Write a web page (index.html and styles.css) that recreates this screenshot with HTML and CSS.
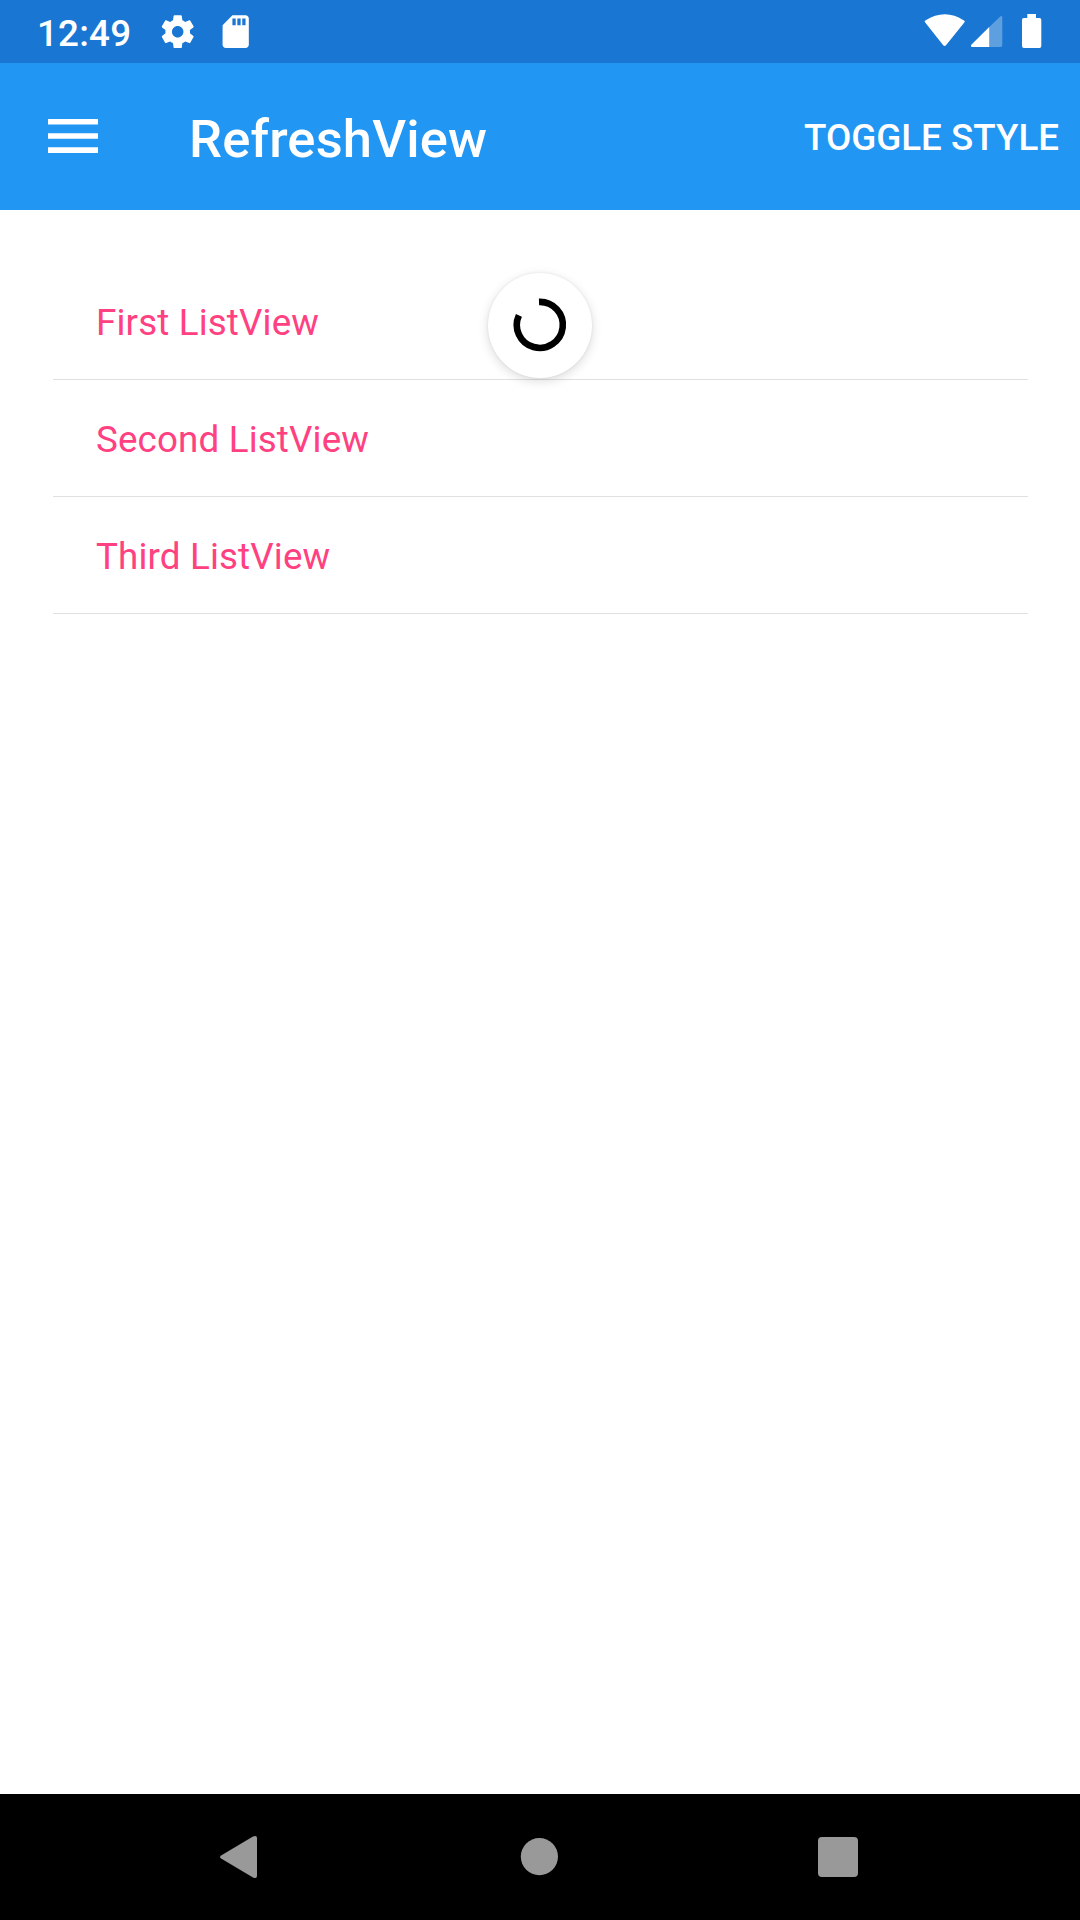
FILE: index.html
```html
<!DOCTYPE html>
<html lang="en">
<head>
<meta charset="utf-8">
<title>RefreshView</title>
<link rel="stylesheet" href="styles.css">
</head>
<body>
<div class="screen">
  <div class="status-bar">
    <span class="clock">12:49</span>
    <svg class="icon-gear" viewBox="0 0 24 24"><path d="M19.43 12.98c.04-.32.07-.64.07-.98s-.03-.66-.07-.98l2.11-1.65c.19-.15.24-.42.12-.64l-2-3.46c-.12-.22-.39-.3-.61-.22l-2.49 1c-.52-.4-1.08-.73-1.69-.98l-.38-2.65C14.46 2.18 14.25 2 14 2h-4c-.25 0-.46.18-.49.42l-.38 2.65c-.61.25-1.17.59-1.69.98l-2.49-1c-.23-.09-.49 0-.61.22l-2 3.46c-.13.22-.07.49.12.64l2.11 1.65c-.04.32-.07.65-.07.98s.03.66.07.98l-2.11 1.65c-.19.15-.24.42-.12.64l2 3.46c.12.22.39.3.61.22l2.49-1c.52.4 1.08.73 1.69.98l.38 2.65c.03.24.24.42.49.42h4c.25 0 .46-.18.49-.42l.38-2.65c.61-.25 1.17-.59 1.69-.98l2.49 1c.23.09.49 0 .61-.22l2-3.46c.12-.22.07-.49-.12-.64l-2.11-1.65zM12 15.5c-1.93 0-3.5-1.57-3.5-3.5s1.57-3.5 3.5-3.5 3.5 1.57 3.5 3.5-1.57 3.5-3.5 3.5z"/></svg>
    <svg class="icon-sd" viewBox="0 0 24 24"><path d="M18 2h-8L4.02 8 4 20c0 1.100.9 2 2 2h12c1.100 0 2-.9 2-2V4c0-1.100-.9-2-2-2zm-6 6h-2V4h2v4zm3 0h-2V4h2v4zm3 0h-2V4h2v4z"/></svg>
    <svg class="status-icons" viewBox="0 0 124 40">
      <path d="M1.200 8.600Q0 7.300 1.300 6.400Q21-6 40 6.400Q41.300 7.300 40.300 8.600L22.200 31Q20.600 32.800 19 31Z"/>
      <path class="faint" d="M65 13.200L76 2.700Q78.300 1 78.300 3.500V31Q78.300 33 76.500 33H65Z"/>
      <path d="M65.200 13V33H49Q46.100 33 47.300 30.700Z"/>
      <path d="M103.300 0H112V4H115.500Q117.300 4 117.300 5.800V32Q117.300 34 115.500 34H100Q98 34 98 32V5.800Q98 4 99.800 4H103.300Z"/>
    </svg>
  </div>
  <header class="app-bar">
    <svg class="icon-menu" viewBox="0 0 50 34"><path d="M0 0H50V5.600H0ZM0 14.200H50V19.800H0ZM0 28.200H50V34H0Z"/></svg>
    <h1 class="title">RefreshView</h1>
    <span class="action">TOGGLE STYLE</span>
  </header>
  <main class="content">
    <ul class="list">
      <li class="row">First ListView</li>
      <li class="row">Second ListView</li>
      <li class="row">Third ListView</li>
    </ul>
    <div class="refresh">
      <svg viewBox="0 0 104 105"><path d="M51 28.900A23 23 0 1 1 30.900 42.300"/></svg>
    </div>
  </main>
  <nav class="nav-bar">
    <svg viewBox="0 0 44 44"><path d="M1.500 20.200Q-1.500 22 1.500 23.800L33 42.400Q37 44.300 37 40.800V3.200Q37-.3 33 1.600Z"/></svg>
    <svg viewBox="0 0 44 44"><circle cx="21.400" cy="21.600" r="18.600"/></svg>
    <svg viewBox="0 0 44 44"><rect x="2" y="2" width="40" height="40" rx="4"/></svg>
  </nav>
</div>
</body>
</html>
```
FILE: styles.css
```css
* { box-sizing: border-box; }

body {
  margin: 0;
  font-family: Roboto, sans-serif;
  font-size: 36.75px;
  background: #fff;
}

.screen {
  display: flex;
  flex-direction: column;
  width: 1080px;
  height: 1920px;
  overflow: hidden;
}

svg { display: block; flex: none; }

.status-bar {
  display: flex;
  align-items: flex-start;
  height: 63px;
  padding-left: 37px;
  background: #1976d2;
  color: #fff;
  fill: #fff;
}

.clock {
  width: 121px;
  padding-top: 12px;
  line-height: 43px;
  font-weight: 500;
  letter-spacing: .2px;
}

.icon-gear,
.icon-sd {
  width: 39.400px;
  height: 39.400px;
  margin-top: 12px;
}

.icon-sd { margin-left: 19px; }

.status-icons {
  width: 124px;
  height: 40px;
  margin: 14px 32px 0 auto;
}

.faint { opacity: .3; }

.app-bar {
  display: flex;
  align-items: flex-start;
  height: 147px;
  padding: 0 21px 0 48px;
  background: #2196f3;
  color: #fff;
}

.icon-menu {
  width: 50px;
  height: 34px;
  margin: 56px 91px 0 0;
  fill: #fff;
}

.title {
  margin: 45px 0 0;
  font-size: 52.500px;
  font-weight: 500;
  line-height: 62px;
  letter-spacing: .15px;
}

.action {
  margin: 53px 0 0 auto;
  line-height: 43px;
  font-weight: 500;
}

.content {
  position: relative;
  flex: 1;
  padding: 53px 52px 0 53px;
}

.list {
  margin: 0;
  padding: 0;
  list-style: none;
}

.row {
  height: 117px;
  padding: 38px 0 0 43px;
  border-bottom: 1px solid #e0e0e0;
  color: #ff4081;
  line-height: 43px;
  letter-spacing: .15px;
}

/* Pull-to-refresh indicator floating above the list */
.refresh {
  position: absolute;
  top: 63px;
  left: 488px;
  width: 104px;
  height: 105px;
  border-radius: 50%;
  background: #fff;
  box-shadow: 0 3px 11px rgba(0, 0, 0, .14), 0 0 3px rgba(0, 0, 0, .08);
}

.refresh path {
  fill: none;
  stroke: #000;
  stroke-width: 6.600;
}

.nav-bar {
  display: flex;
  justify-content: space-between;
  height: 126px;
  padding: 41px 220px 0;
  background: #000;
  fill: #999;
}

.nav-bar svg {
  width: 44px;
  height: 44px;
}
```
